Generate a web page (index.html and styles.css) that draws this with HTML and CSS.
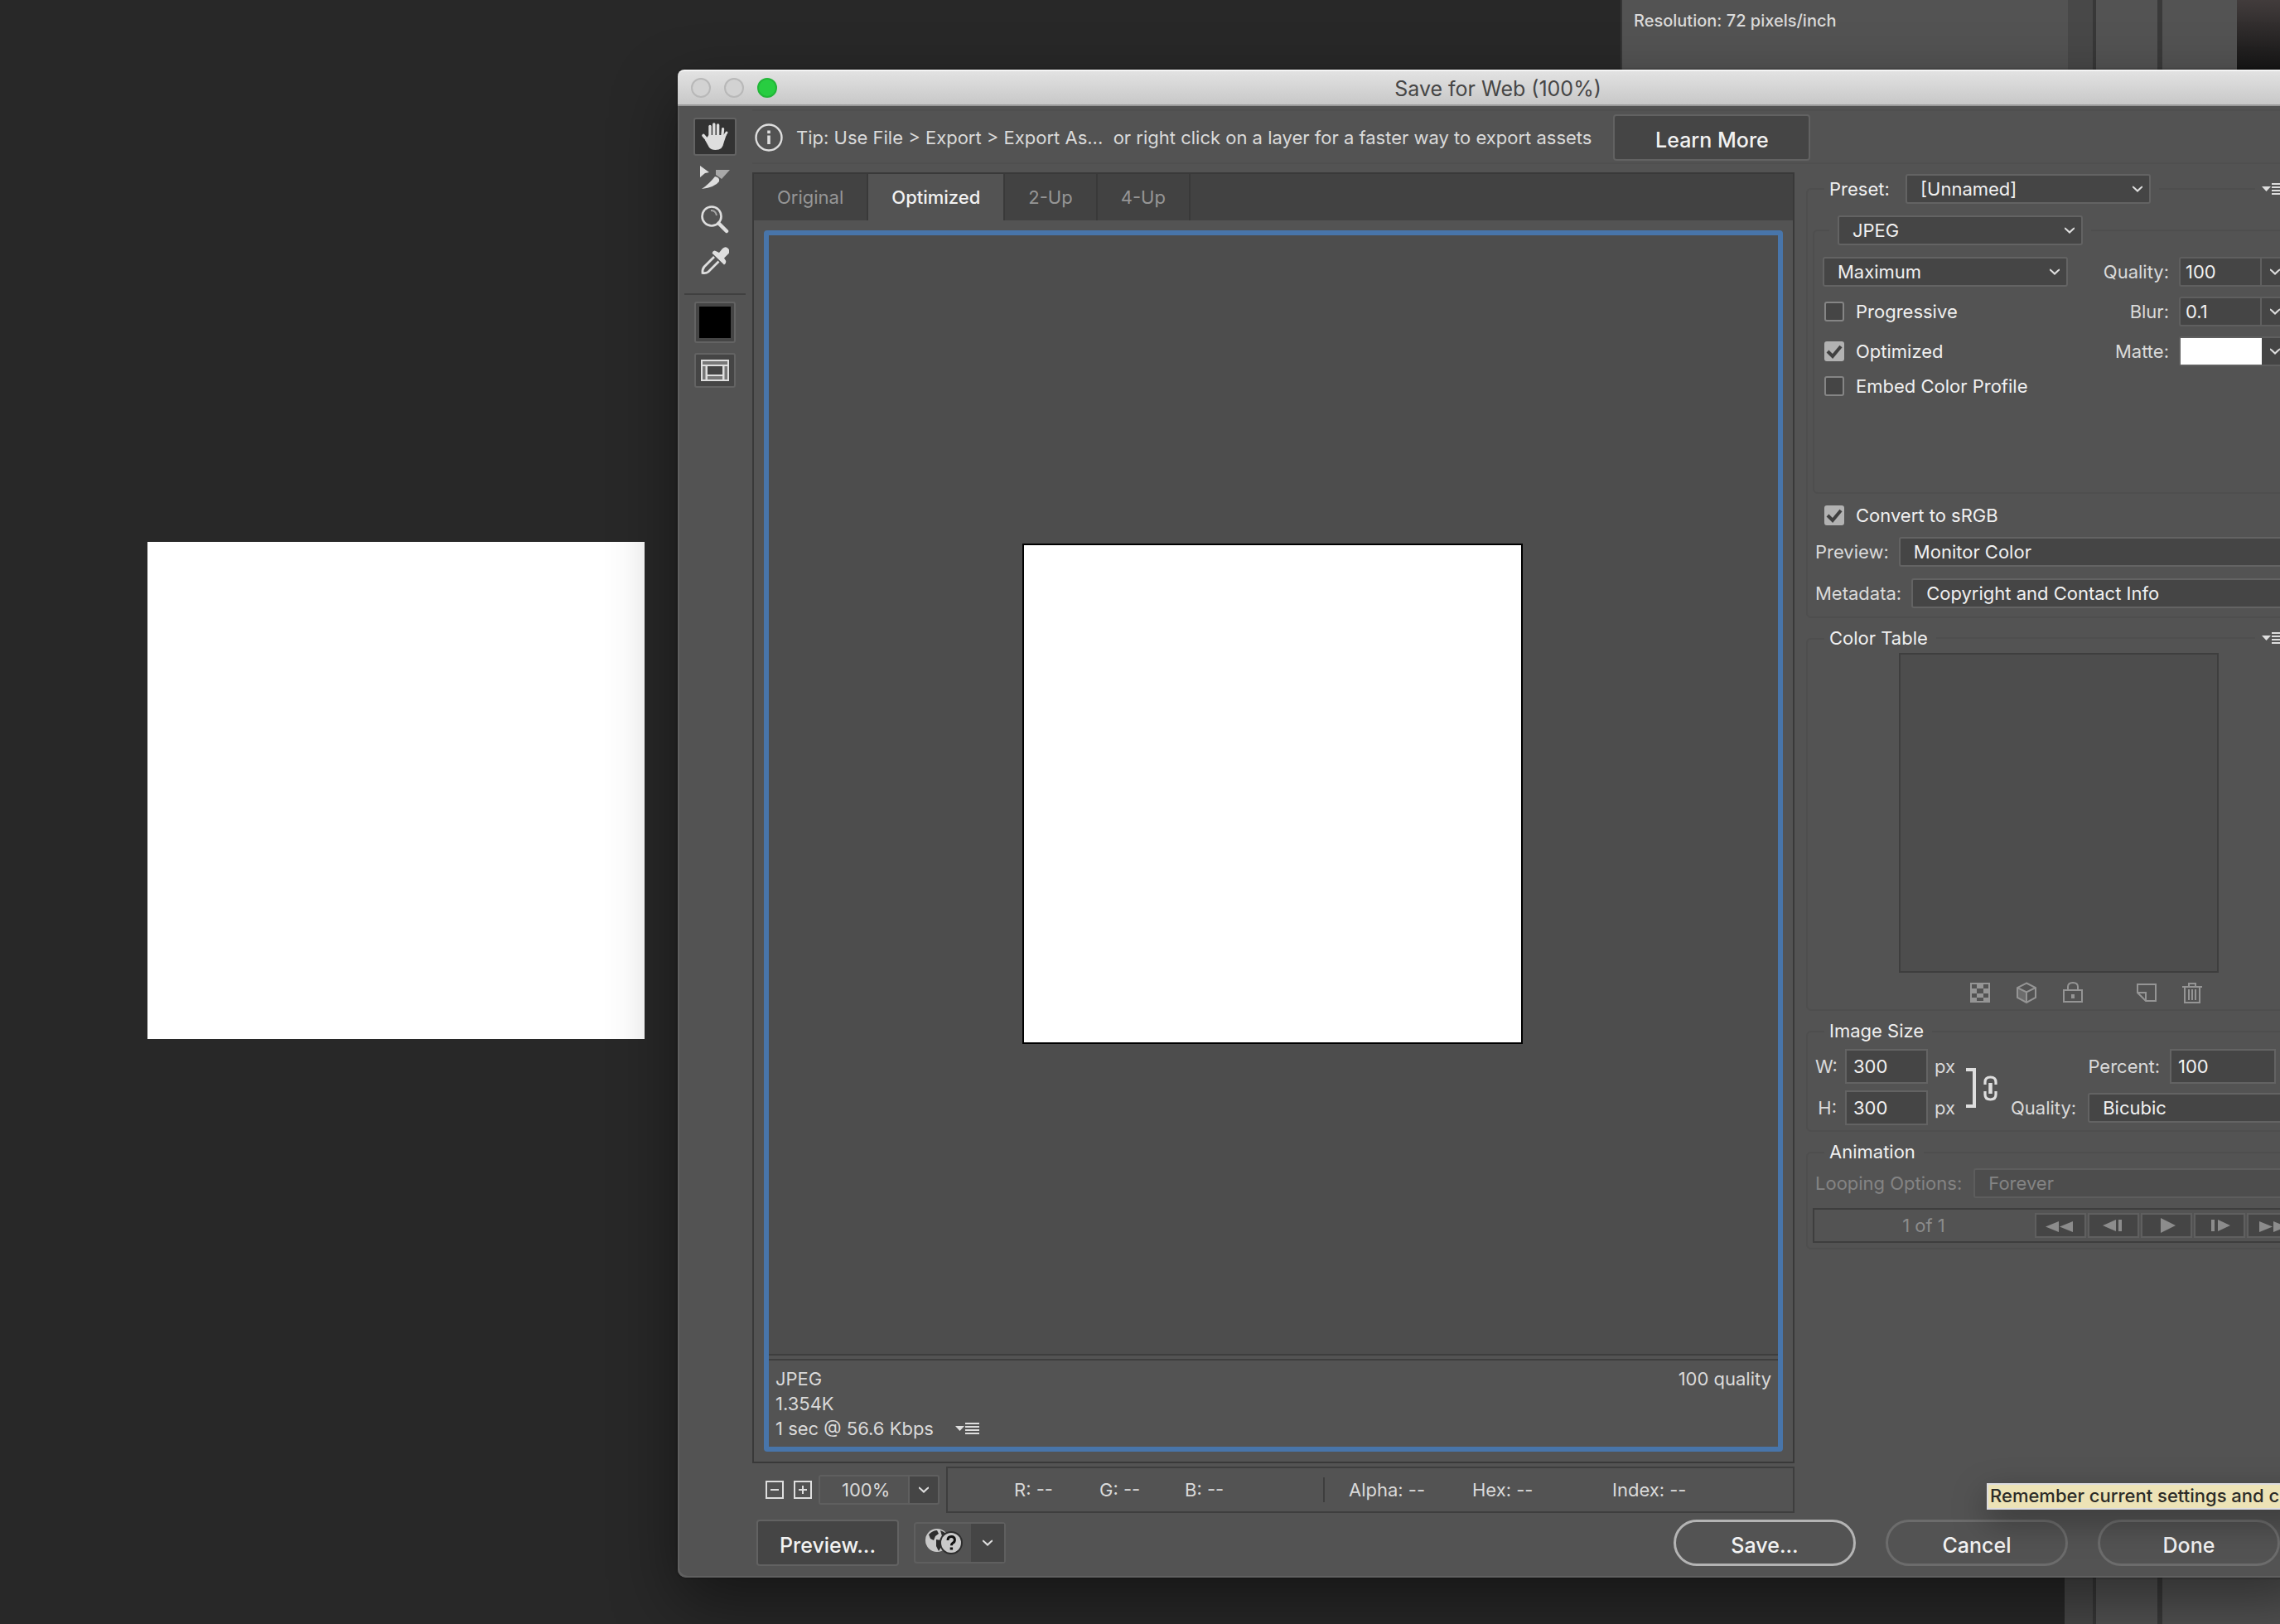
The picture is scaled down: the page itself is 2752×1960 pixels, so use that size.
FILE: index.html
```html
<!DOCTYPE html>
<html lang="en">
<head>
<meta charset="utf-8">
<title>Save for Web (100%)</title>
<link rel="stylesheet" href="styles.css">
</head>
<body>
<svg class="defs" aria-hidden="true">
  <symbol id="chevron" viewBox="0 0 16 10"><path d="M2 2.500 Q3 2.500 8 7.500 Q13 2.500 14 2.500" fill="none" stroke="currentColor" stroke-width="2.200"/></symbol>
  <symbol id="flyout" viewBox="0 0 30 16"><path d="M0 5h11l-5.500 6z" fill="currentColor"/><path d="M12 2h17M12 6h17M12 10h17M12 14h17" stroke="currentColor" stroke-width="2"/></symbol>
</svg>

<div class="workspace">
  <div class="artboard-area"><div class="artboard"></div></div>
  <section class="info-palette">Resolution: 72 pixels/inch</section>
  <div class="dock">
    <div class="dock-gutter"></div>
    <div class="dock-column"></div>
    <div class="dock-panels"><div class="picker"></div></div>
  </div>
</div>

<div class="dialog" role="dialog" aria-labelledby="dialog-title">
  <header class="titlebar">
    <div class="lights"><button class="light" aria-label="Close window"></button><button class="light" aria-label="Minimize"></button><button class="light zoom" aria-label="Zoom"></button></div>
    <h1 id="dialog-title">Save for Web (100%)</h1>
  </header>

  <div class="content">
    <nav class="tools" aria-label="Tools">
      <button class="tool active" aria-label="Hand">
        <svg width="34" height="36" viewBox="0 0 34 36"><g fill="none" stroke="#dedede" stroke-linecap="round"><path d="M11 20V5.500" stroke-width="3.400"/><path d="M15.800 19V3" stroke-width="3.400"/><path d="M20.600 19V4" stroke-width="3.400"/><path d="M25.600 20l1-11.500" stroke-width="3.200"/><path d="M9.500 24L3 16.500" stroke-width="3.600"/><path d="M29 16l2-3" stroke-width="3"/></g><path d="M9.500 16h17l3-1q2 0 .5 3-1 3-2 6-1 5-3.500 8-2.500 2-7 2-5 0-7.500-3L5 22z" fill="#dedede"/></svg>
      </button>
      <button class="tool" aria-label="Slice Select">
        <svg width="38" height="32" viewBox="0 0 38 32"><path d="M1 1l11 8-5 1-6 5z" fill="#dedede"/><path d="M20 6h17L27 17l-7-5z" fill="#a8a8a8"/><path d="M19 14q6 1 5 6-5 7-21 9 9-6 16-15z" fill="#dedede"/></svg>
      </button>
      <button class="tool" aria-label="Zoom">
        <svg width="34" height="34" viewBox="0 0 34 34" fill="none" stroke="#dedede"><circle cx="13" cy="13" r="11.500" stroke-width="2.600"/><path d="M12 6q6 0 7 6" stroke-width="2" stroke="#a8a8a8"/><path d="M21.500 21.500L31 31" stroke-width="4.500" stroke-linecap="round"/></svg>
      </button>
      <button class="tool" aria-label="Eyedropper">
        <svg width="34" height="34" viewBox="0 0 34 34"><path d="M18 5l4 2 4-5q4-3.500 7 0t0 6.500l-5 5 2 3q1 3-2 5L13.500 7.500Q15 3.500 18 5z" fill="#dedede"/><path d="M16 12L4 24q-2.500 3-2 7.500 4 .8 7-1.500L21.500 17.500" fill="none" stroke="#dedede" stroke-width="2.800"/></svg>
      </button>
      <hr class="tool-rule">
      <button class="tool-box swatch" aria-label="Eyedropper color"><span></span></button>
      <button class="tool-box slices" aria-label="Toggle slices visibility">
        <svg width="34" height="26" viewBox="0 0 34 26"><path d="M0 0h34v26H0z" fill="#dedede"/><path d="M2 2h30v4H2zM2 8h3.500v16H2zM28.500 8H32v16h-3.500zM8 20h18v4H8z" fill="#777"/><path d="M8 8h18v10H8z" fill="#454545"/></svg>
      </button>
    </nav>

    <div class="body">
      <div class="tip">
        <svg width="34" height="34" viewBox="0 0 34 34" fill="none" stroke="#dedede"><circle cx="17" cy="17" r="15.500" stroke-width="2.400"/><path d="M17 14.500V25" stroke-width="3.600"/><path d="M17 8.500v3.600" stroke-width="3.600"/></svg>
        <p>Tip: Use File &gt; Export &gt; Export As...&nbsp; or right click on a layer for a faster way to export assets</p>
        <button class="btn learn">Learn More</button>
      </div>

      <div class="columns">
        <main class="viewer">
          <div class="panel">
            <div class="tabs" role="tablist">
              <button class="tab" role="tab">Original</button>
              <button class="tab selected" role="tab" aria-selected="true">Optimized</button>
              <button class="tab" role="tab">2-Up</button>
              <button class="tab" role="tab">4-Up</button>
            </div>
            <div class="frame">
              <div class="stage"><div class="preview-image"></div></div>
              <div class="stats">
                <div>JPEG<br>1.354K<br>1 sec @ 56.6 Kbps <button class="flyout stat-menu" aria-label="Download speed"><svg width="30" height="16"><use href="#flyout"/></svg></button></div>
                <div>100 quality</div>
              </div>
            </div>
          </div>
          <div class="readout-row">
            <button class="step" aria-label="Zoom out"><svg width="22" height="22" viewBox="0 0 22 22" fill="none" stroke="#dedede" stroke-width="2"><path d="M1 1h20v20H1zM6 11h10"/></svg></button>
            <button class="step" aria-label="Zoom in"><svg width="22" height="22" viewBox="0 0 22 22" fill="none" stroke="#dedede" stroke-width="2"><path d="M1 1h20v20H1zM6 11h10M11 6v10"/></svg></button>
            <div class="combo zoom-combo"><input aria-label="Zoom level" value="100%"><button class="drop" aria-label="Zoom levels"><svg width="16" height="10"><use href="#chevron"/></svg></button></div>
            <div class="readout"><span>R: --</span><span>G: --</span><span>B: --</span><span class="split">Alpha: --</span><span>Hex: --</span><span>Index: --</span></div>
          </div>
        </main>

        <aside class="settings">
          <fieldset class="group preset">
            <legend><span class="legend-row"><label for="preset">Preset:</label><select id="preset" class="medium"><option>[Unnamed]</option></select><span class="line"></span><button class="flyout" aria-label="Optimize menu"><svg width="30" height="16"><use href="#flyout"/></svg></button></span></legend>
            <fieldset class="group format">
              <legend><select class="medium" aria-label="Format"><option>JPEG</option></select></legend>
              <div class="format-grid">
                <select class="medium" aria-label="Compression"><option>Maximum</option></select>
                <label class="end" for="quality">Quality:</label>
                <div class="combo"><input id="quality" value="100"><button class="drop" aria-label="Quality slider"><svg width="16" height="10"><use href="#chevron"/></svg></button></div>
                <label class="check"><input type="checkbox">Progressive</label>
                <label class="end" for="blur">Blur:</label>
                <div class="combo"><input id="blur" value="0.1"><button class="drop" aria-label="Blur slider"><svg width="16" height="10"><use href="#chevron"/></svg></button></div>
                <label class="check"><input type="checkbox" checked>Optimized</label>
                <span class="end">Matte:</span>
                <div class="combo"><button class="matte" aria-label="Matte color"></button><button class="drop" aria-label="Matte options"><svg width="16" height="10"><use href="#chevron"/></svg></button></div>
                <label class="check"><input type="checkbox">Embed Color Profile</label>
              </div>
            </fieldset>
            <label class="check srgb"><input type="checkbox" checked>Convert to sRGB</label>
            <div class="field"><label for="preview">Preview:</label><select id="preview"><option>Monitor Color</option></select></div>
            <div class="field"><label for="metadata">Metadata:</label><select id="metadata"><option>Copyright and Contact Info</option></select></div>
          </fieldset>

          <fieldset class="group">
            <legend><span class="legend-row">Color Table<span class="line"></span><button class="flyout" aria-label="Color table menu"><svg width="30" height="16"><use href="#flyout"/></svg></button></span></legend>
            <div class="color-table"></div>
            <div class="table-tools">
              <button aria-label="Map to transparent"><svg width="24" height="24" viewBox="0 0 24 24"><path d="M1 1h22v22H1z" fill="none" stroke="currentColor" stroke-width="2"/><path d="M8 2h8v5H8zM2 7h6v6H2zM16 7h6v6h-6zM8 13h8v5H8zM2 18h6v4H2zM16 18h6v4h-6z" fill="currentColor"/></svg></button>
              <button aria-label="Shift to web palette"><svg width="26" height="26" viewBox="0 0 26 26"><path d="M2 7l11 5v13L2 19z" fill="#6c6c6c"/><path d="M13 1.500L24 7v12l-11 6L2 19V7zM2 7l11 5.500L24 7M13 12.500V25" fill="none" stroke="currentColor" stroke-width="2"/></svg></button>
              <button aria-label="Lock color"><svg width="24" height="26" viewBox="0 0 24 26"><path d="M1 10h22v14H1zM6 10V6q0-5 6-5t6 5v4" fill="none" stroke="currentColor" stroke-width="2"/><path d="M10 15h4v5h-4z" fill="currentColor"/></svg></button>
              <button class="apart" aria-label="New color"><svg width="24" height="22" viewBox="0 0 24 22"><path d="M1 11V1h22v20H11L1 11h10v10" fill="none" stroke="currentColor" stroke-width="2"/></svg></button>
              <button aria-label="Delete color"><svg width="24" height="26" viewBox="0 0 24 26"><path d="M0 6h24M8 5V2h8v3M3 6v19h18V6M8 9v13M12 9v13M16 9v13" fill="none" stroke="currentColor" stroke-width="2"/></svg></button>
            </div>
          </fieldset>

          <fieldset class="group">
            <legend>Image Size</legend>
            <div class="size">
              <div class="dims">
                <label for="w">W:</label><input id="w" class="text" value="300"><span>px</span>
                <label for="h">H:</label><input id="h" class="text" value="300"><span>px</span>
              </div>
              <svg class="link" width="40" height="50" viewBox="0 0 40 50" fill="none" stroke="#dedede"><path d="M0 3h10v44H0" stroke-width="4"/><path d="M23 21v-3q0-6 6.500-6t6.500 6v3M23 29v4q0 6 6.500 6t6.500-6v-4" stroke-width="3.200"/><path d="M29.500 19v13" stroke-width="4.500"/></svg>
              <div class="scale">
                <label for="percent">Percent:</label><input id="percent" class="text" value="100">
                <div class="field resample"><label for="resample">Quality:</label><select id="resample"><option>Bicubic</option></select></div>
              </div>
            </div>
          </fieldset>

          <fieldset class="group">
            <legend>Animation</legend>
            <div class="field disabled"><label for="loop">Looping Options:</label><select id="loop" disabled><option>Forever</option></select></div>
            <div class="frames">
              <span>1 of 1</span>
              <button disabled aria-label="First frame"><svg width="40" height="18" viewBox="0 0 40 18"><path d="M18 4v13L2 10.500zM35 4v13l-16-6.500z"/></svg></button>
              <button disabled aria-label="Previous frame"><svg width="40" height="18" viewBox="0 0 40 18"><path d="M23 2v14L7 9zM26 2h4v14h-4z"/></svg></button>
              <button disabled aria-label="Play"><svg width="40" height="18" viewBox="0 0 40 18"><path d="M13 0v18l18-9z"/></svg></button>
              <button disabled aria-label="Next frame"><svg width="40" height="18" viewBox="0 0 40 18"><path d="M10 2h4v14h-4zM18 2v14l15-7z"/></svg></button>
              <button disabled aria-label="Last frame"><svg width="40" height="18" viewBox="0 0 40 18"><path d="M4 4v13l16-6.500zM21 4v13l16-6.500z"/></svg></button>
            </div>
          </fieldset>
        </aside>
      </div>
    </div>
  </div>

  <footer class="actions">
    <button class="btn">Preview...</button>
    <div class="browser">
      <button class="globe" aria-label="Preview in browser">
        <svg width="46" height="32" viewBox="0 0 46 32"><circle cx="15" cy="15" r="14" fill="#c9c9c9"/><path d="M5 8q5-5 10-5l2 4-4 3-2 5-4-2zM14 14l6 1 2 5-5 8-3-6zM19 3q6 2 8 6l-6 1z" fill="#2d2d2d"/><circle cx="32" cy="18" r="14" fill="#2d2d2d"/><circle cx="32" cy="18" r="12" fill="#c9c9c9"/><path d="M28 15q0-4.500 4.200-4.500t4.200 4q0 2.500-2.400 3.800-1.600 1-1.600 3" fill="none" stroke="#111" stroke-width="3"/><path d="M30.700 23.500h3.400v3h-3.400z" fill="#111"/></svg>
      </button>
      <button class="drop" aria-label="Select browser"><svg width="16" height="10"><use href="#chevron"/></svg></button>
    </div>
    <div class="confirm">
      <button class="pill primary">Save...</button>
      <button class="pill">Cancel</button>
      <button class="pill">Done</button>
    </div>
  </footer>
  <div class="tooltip" role="tooltip">Remember current settings and c</div>
</div>
</body>
</html>
```

FILE: styles.css
```css
* { box-sizing: border-box; }
html, body { height: 100%; }
body {
  margin: 0;
  overflow: hidden;
  position: relative;
  background: #282828;
  color: #dadada;
  font: 400 22px/30px Inter, "Liberation Sans", sans-serif;
}
button, input, select { font: inherit; color: inherit; margin: 0; padding: 0; border: 0; border-radius: 0; background: none; }
button { display: flex; align-items: center; justify-content: center; }
p, h1, hr, fieldset { margin: 0; }
.defs { position: absolute; width: 0; height: 0; }

/* Workspace behind the dialog */
.workspace { display: flex; height: 100%; }
.artboard-area { flex: 1; padding: 654px 0 0 178px; }
.artboard { width: 600px; height: 600px; background: #fff; }
.info-palette {
  position: relative; width: 540px; height: 600px; margin-right: -4px; padding: 10px 14px;
  background: #535353; border-left: 2px solid #363636;
  font-size: 20px; font-weight: 500;
}
.dock { display: flex; width: 260px; background: #535353; }
.dock-gutter { width: 38px; background: #484848; border-right: 4px solid #383838; }
.dock-column { width: 80px; border-right: 6px solid #3a3a3a; }
.dock-panels { flex: 1; display: flex; justify-content: flex-end; }
.picker { width: 52px; height: 200px; background: linear-gradient(#423c3c, #151515 84px); }

/* Dialog */
.dialog {
  position: absolute; left: 818px; right: -46px; top: 84px; bottom: 56px;
  display: flex; flex-direction: column;
  background: #535353; border-radius: 10px;
  box-shadow: inset 2px -2px 0 #606060, 0 0 3px rgba(0,0,0,.5), 0 30px 80px rgba(0,0,0,.45);
}
.titlebar {
  position: relative; display: flex; align-items: center; justify-content: center;
  height: 44px; border-radius: 8px 8px 0 0;
  background: linear-gradient(#e2e2e2, #c8c8c8);
  border-top: 2px solid #f4f4f4; border-bottom: 2px solid #9a9a9a;
}
.titlebar h1 { padding-top: 2px; font-size: 25px; font-weight: 400; color: #464646; }
.lights { position: absolute; left: 16px; display: flex; gap: 16px; }
.light { width: 24px; height: 24px; border-radius: 50%; border: 2px solid #b8b8b8; background: #d2d2d2; }
.light.zoom { background: #28cd41; border-color: #22b638; }
.content { flex: 1; display: flex; min-height: 0; }

.tools { width: 90px; padding-top: 14px; display: flex; flex-direction: column; align-items: center; gap: 4px; }
.tool { width: 52px; height: 46px; border: 2px solid transparent; border-radius: 3px; }
.tool.active { background: #333; border-color: #636363; }
.tool-rule { width: 74px; margin: 12px 0 4px; border: 0; border-top: 2px solid #404040; }
.tool-box { width: 50px; border: 2px solid #636363; border-radius: 3px; background: #454545; }
.swatch { height: 50px; }
.swatch span { width: 38px; height: 38px; background: #000; }
.slices { height: 42px; margin-top: 8px; }

.body { flex: 1; display: flex; flex-direction: column; min-width: 0; }
.tip { display: flex; align-items: center; gap: 16px; height: 66px; margin: 4px 14px 10px 0; padding: 2px 0 0 3px; border: solid #4f4f4f; border-width: 2px 0; }
.btn { height: 56px; border: 2px solid #626262; border-radius: 4px; background: #454545; color: #f2f2f2; font-size: 25px; font-weight: 500; padding: 6px 26px 0; }
.learn { width: 238px; margin-left: 10px; }
.columns { flex: 1; display: flex; min-height: 0; }

/* Viewer */
.viewer { flex: 1; display: flex; flex-direction: column; gap: 4px; }
.panel { flex: 1; display: flex; flex-direction: column; border: 2px solid #393939; }
.tabs { display: flex; height: 56px; background: #424242; }
.tab { border-right: 2px solid #393939; padding: 0 28px; color: #969696; }
.tab.selected { background: #535353; color: #f2f2f2; font-weight: 500; }
.frame { flex: 1; margin: 12px; display: flex; flex-direction: column; border: 6px solid #4875aa; border-radius: 4px; }
.stage { flex: 1; display: flex; align-items: center; justify-content: center; padding: 0 2px 2px 0; background: #4d4d4d; border-bottom: 2px solid #3e3e3e; }
.preview-image { width: 604px; height: 604px; border: 2px solid #000; background: #fff; }
.stats { display: flex; justify-content: space-between; margin-top: 4px; padding: 7px 8px; border-top: 2px solid #3e3e3e; }
.flyout { color: #dedede; }
.stat-menu { display: inline-flex; margin-left: 20px; }

.readout-row { display: flex; align-items: center; height: 56px; padding-left: 16px; }
.step { margin-right: 12px; }
.step + .step { margin-right: 8px; }
.combo { display: flex; height: 36px; border: 2px solid #5f5f5f; border-radius: 3px; background: #454545; color: #f0f0f0; }
.combo input { width: 98px; padding: 0 6px; border-right: 2px solid #5f5f5f; }
.drop { flex: 1; color: #dedede; }
.combo.zoom-combo { width: 146px; margin-right: 8px; color: #dadada; }
.zoom-combo input { width: 108px; background: #535353; padding-left: 26px; }
.readout { flex: 1; align-self: stretch; display: grid; grid-template-columns: 103px 103px 167px 180px 169px auto; align-items: center; padding-left: 80px; border: 2px solid #3e3e3e; }
.split { padding-left: 29px; border-left: 2px solid #3e3e3e; }

/* Settings column */
.settings { width: 632px; padding: 2px 14px; }
.group { min-width: 0; border: 2px solid #4e4e4e; border-radius: 6px; padding: 0 0 10px 6px; margin-bottom: 8px; color: inherit; }
legend { height: 34px; margin-left: 14px; padding: 0 10px 4px 6px; line-height: 32px; color: #f0f0f0; }
.legend-row { display: flex; align-items: center; width: 552px; }
.legend-row label { width: 92px; }
.line { flex: 1; margin: 0 8px 0 10px; border-top: 2px solid #4e4e4e; }
.group > legend:has(.line) { padding-right: 0; }
.preset > legend { height: 36px; padding-top: 0; padding-bottom: 0; }
select {
  appearance: none; height: 36px; flex: 1; min-width: 0; padding: 0 40px 0 16px;
  border: 2px solid #636363; border-radius: 3px; color: #f0f0f0;
  background: #454545 url("data:image/svg+xml,%3Csvg xmlns='http://www.w3.org/2000/svg' width='16' height='10'%3E%3Cpath d='M2 2.500Q3 2.500 8 7.500Q13 2.500 14 2.500' fill='none' stroke='%23dedede' stroke-width='2.200'/%3E%3C/svg%3E") no-repeat right 6px center;
}
select.medium { flex: none; width: 296px; display: block; }
select:disabled { opacity: 1; color: #848484; background-color: #4d4d4d; border-color: #5d5d5d; }
.format { height: 336px; margin: 14px 6px 14px 0; }
.format > legend { height: 36px; padding: 0 10px; margin-left: 12px; }
.format-grid { display: grid; grid-template-columns: 296px 110px 134px; gap: 12px; padding: 14px 0 0 4px; align-items: center; }
.end { text-align: right; }
.check { display: flex; align-items: center; gap: 14px; height: 24px; padding-left: 2px; color: #f0f0f0; }
.check input {
  appearance: none; width: 24px; height: 24px; border: 2px solid #858585; border-radius: 3px; background: #454545;
}
.check input:checked {
  border-color: #b2b2b2;
  background: #b2b2b2 url("data:image/svg+xml,%3Csvg xmlns='http://www.w3.org/2000/svg' width='20' height='20'%3E%3Cpath d='M2 10l6 6L18 4' fill='none' stroke='%23404040' stroke-width='4'/%3E%3C/svg%3E") center;
}
.matte { width: 98px; background: #fff; }
.srgb { margin-left: 12px; }
.field { display: flex; align-items: center; gap: 12px; padding-left: 3px; }
.preset > .field { margin-top: 14px; }
.color-table { width: 386px; height: 386px; margin-left: 104px; border: 2px solid #3e3e3e; background: #4d4d4d; }
.table-tools { display: flex; align-items: center; height: 44px; margin-bottom: -10px; padding: 4px 0 0 190px; gap: 31px; color: #959595; }
.apart { margin-left: 34px; }
.size { display: flex; align-items: center; margin-top: 4px; padding: 0 0 0 3px; margin-bottom: -4px; }
.dims { display: grid; grid-template-columns: 28px 100px 34px; gap: 8px; align-items: center; text-align: right; }
.dims label { padding-right: 2px; }
.dims span { text-align: left; }
.text { width: 100px; height: 42px; padding: 0 8px; border: 2px solid #636363; background: #454545; color: #f2f2f2; }
.link { margin: 2px 0 0 4px; }
.scale { flex: 1; display: grid; grid-template-columns: 180px 1fr; gap: 8px 12px; align-items: center; text-align: right; margin-left: 14px; }
#percent { width: 128px; }
.resample { grid-column: 1 / 3; height: 42px; padding: 0; gap: 14px; }
.disabled { color: #848484; margin-top: 2px; gap: 14px; }
.frames { display: flex; align-items: center; gap: 2px; height: 42px; margin: 12px 6px -4px 0; border: 2px solid #3e3e3e; color: #8c8c8c; }
.frames span { width: 264px; text-align: center; }
.frames button { width: 62px; height: 30px; border: 2px solid #5f5f5f; background: #454545; }
.frames svg { fill: #8c8c8c; }

/* Bottom buttons */
.actions { display: flex; align-items: center; margin: 8px 46px 14px 95px; }
.browser { display: flex; width: 111px; height: 50px; margin-left: 18px; border: 2px solid #5f5f5f; border-radius: 4px; }
.globe { width: 67px; padding-bottom: 4px; }
.browser .drop { background: #454545; }
.confirm { display: flex; gap: 36px; margin-left: auto; }
.pill { width: 220px; height: 56px; padding-top: 6px; border: 3px solid #6c6c6c; border-radius: 28px; color: #f2f2f2; font-size: 25px; font-weight: 500; }
.pill.primary { border-color: #b4b4b4; }
.tooltip {
  position: absolute; left: 1580px; right: 0; bottom: 82px; height: 32px; padding: 0 2px; line-height: 26px;
  white-space: nowrap; font-weight: 500; color: #2c2c28; background: #ede3b6; border: 2px solid #dcdce0;
  box-shadow: 0 14px 40px rgba(0,0,0,.35);
}
```
